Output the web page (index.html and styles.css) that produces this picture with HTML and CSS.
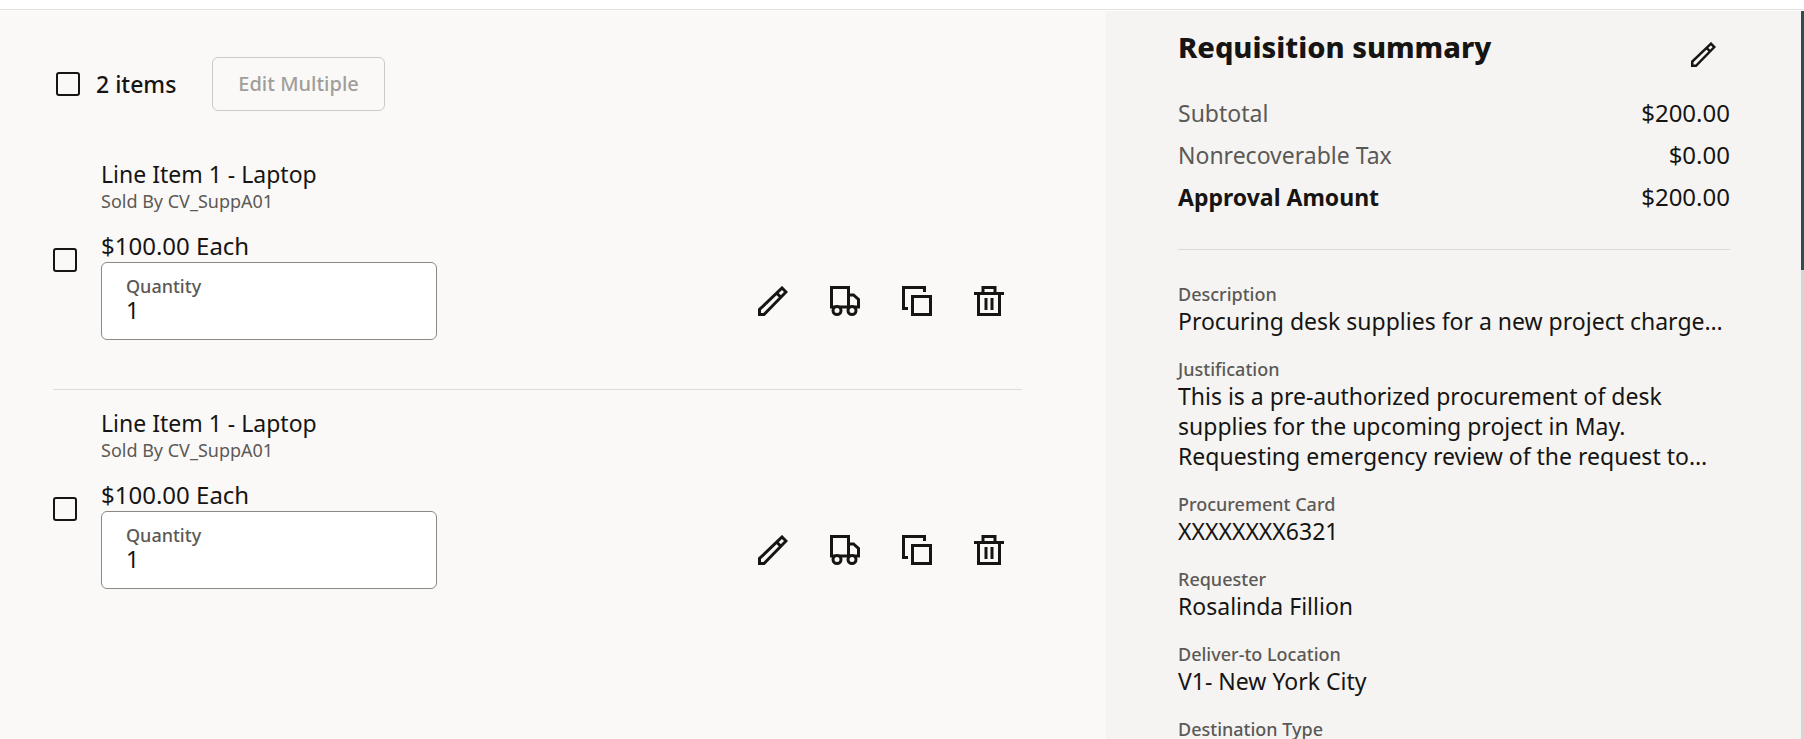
FILE: index.html
```html
<!DOCTYPE html>
<html lang="en">
<head>
<meta charset="utf-8">
<meta name="viewport" content="width=device-width, initial-scale=1">
<title>Requisition</title>
<link rel="stylesheet" href="styles.css">
</head>
<body>
<svg class="sprite" aria-hidden="true">
  <symbol id="icon-pencil" viewBox="0 0 30 30">
    <path d="M1.5 28.500V23.500L24 2 28 6 6 28.500ZM18.500 7 23 11.300" fill="none" stroke="currentColor" stroke-width="3"/>
  </symbol>
  <symbol id="icon-truck" viewBox="0 0 30 30">
    <path d="M1.500 1.500H18.500V21H1.500ZM18.500 9H23.500L28.500 13.500V21H18.500" fill="none" stroke="currentColor" stroke-width="3"/>
    <circle cx="7" cy="24.500" r="4" class="wheel" stroke="currentColor" stroke-width="3"/>
    <circle cx="22" cy="24.500" r="4" class="wheel" stroke="currentColor" stroke-width="3"/>
  </symbol>
  <symbol id="icon-copy" viewBox="0 0 30 30">
    <path d="M6 22.500H1.500V1.500H22.500V6M10.500 10.500H28.500V28.500H10.500Z" fill="none" stroke="currentColor" stroke-width="3"/>
  </symbol>
  <symbol id="icon-trash" viewBox="0 0 30 30">
    <path d="M0 7.500H30M4.500 7.500V28.500H25.500V7.500M9 7.500V1.500H21V7.500M12 12V24M18 12V24" fill="none" stroke="currentColor" stroke-width="3"/>
  </symbol>
</svg>
<div class="app">
  <header class="topbar"></header>
  <div class="content">
    <main class="items">
      <div class="toolbar">
        <label class="select-all"><input type="checkbox" class="check">2 items</label>
        <button type="button" class="edit-multiple" disabled>Edit Multiple</button>
      </div>
      <ul class="list">
        <li class="row">
          <input type="checkbox" class="check" aria-label="Select line 1">
          <div class="detail">
            <div class="name">Line Item 1 - Laptop</div>
            <div class="seller">Sold By CV_SuppA01</div>
            <div class="price">$100.00 Each</div>
            <div class="field">
              <label for="qty1">Quantity</label>
              <input id="qty1" type="text" value="1">
            </div>
          </div>
          <div class="actions">
            <button type="button" aria-label="Edit"><svg><use href="#icon-pencil"/></svg></button>
            <button type="button" aria-label="Delivery"><svg><use href="#icon-truck"/></svg></button>
            <button type="button" aria-label="Duplicate"><svg><use href="#icon-copy"/></svg></button>
            <button type="button" aria-label="Delete"><svg><use href="#icon-trash"/></svg></button>
          </div>
        </li>
        <li class="row">
          <input type="checkbox" class="check" aria-label="Select line 2">
          <div class="detail">
            <div class="name">Line Item 1 - Laptop</div>
            <div class="seller">Sold By CV_SuppA01</div>
            <div class="price">$100.00 Each</div>
            <div class="field">
              <label for="qty2">Quantity</label>
              <input id="qty2" type="text" value="1">
            </div>
          </div>
          <div class="actions">
            <button type="button" aria-label="Edit"><svg><use href="#icon-pencil"/></svg></button>
            <button type="button" aria-label="Delivery"><svg><use href="#icon-truck"/></svg></button>
            <button type="button" aria-label="Duplicate"><svg><use href="#icon-copy"/></svg></button>
            <button type="button" aria-label="Delete"><svg><use href="#icon-trash"/></svg></button>
          </div>
        </li>
      </ul>
    </main>
    <aside class="summary">
      <div class="summary-head">
        <h2>Requisition summary</h2>
        <button type="button" class="edit-summary" aria-label="Edit summary"><svg><use href="#icon-pencil"/></svg></button>
      </div>
      <dl class="totals">
        <div><dt>Subtotal</dt><dd>$200.00</dd></div>
        <div><dt>Nonrecoverable Tax</dt><dd>$0.00</dd></div>
        <div class="total"><dt>Approval Amount</dt><dd>$200.00</dd></div>
      </dl>
      <dl class="facts">
        <div><dt>Description</dt><dd>Procuring desk supplies for a new project charge…</dd></div>
        <div><dt>Justification</dt><dd>This is a pre-authorized procurement of desk supplies for the upcoming project in May. Requesting emergency review of the request to…</dd></div>
        <div><dt>Procurement Card</dt><dd>XXXXXXXX6321</dd></div>
        <div><dt>Requester</dt><dd>Rosalinda Fillion</dd></div>
        <div><dt>Deliver-to Location</dt><dd>V1- New York City</dd></div>
        <div><dt>Destination Type</dt></div>
      </dl>
    </aside>
    <div class="scroll-track"><div class="scroll-thumb"></div></div>
  </div>
</div>
</body>
</html>
```

FILE: styles.css
```css
* { box-sizing: border-box; }

body {
  margin: 0;
  background: #fff;
  color: #161513;
  font-family: "Noto Sans", "Open Sans", sans-serif;
  font-size: 23px;
  line-height: 30px;
}

.sprite { position: absolute; width: 0; height: 0; }

button, input { font: inherit; color: inherit; margin: 0; }

ul, dl, dd, h2 { margin: 0; padding: 0; }

.app { display: flex; flex-direction: column; height: 100vh; overflow: hidden; }

.topbar { flex: none; height: 10px; margin-bottom: 1px; border-bottom: 1px solid #e1e1e1; }

.content {
  flex: 1;
  display: grid;
  grid-template-columns: minmax(0, 1106fr) minmax(0, 695fr) 3px;
  grid-template-rows: minmax(0, 1fr);
  min-height: 0;
}

.items { padding: 46px 84px 0 53px; background: #fbf9f8; }

.toolbar { display: flex; align-items: center; gap: 36px; padding-left: 3px; }

.select-all { display: flex; align-items: center; gap: 16px; font-weight: 500; }

.check {
  appearance: none;
  flex: none;
  width: 24px;
  height: 24px;
  border: 2px solid #161513;
  border-radius: 3px;
}

.edit-multiple {
  height: 54px;
  padding: 0 25px;
  border: 1px solid #cccac8;
  border-radius: 6px;
  background: transparent;
  color: #a09e9b;
  font-size: 20px;
  font-weight: 500;
}

.list { list-style: none; padding-top: 30px; }

.row { display: flex; align-items: center; padding: 17px 0 49px; border-bottom: 1px solid #dfdddb; }

.row:last-child { border-bottom: 0; }

.row .check { margin-top: 22px; }

.detail { flex: none; width: 336px; margin-left: 24px; }

.name { padding-top: 1px; }

.seller { font-size: 18px; line-height: 24px; color: #5b5956; }

.price { padding: 18px 0 1px; font-size: 24px; }

.field {
  height: 78px;
  padding: 12px 24px;
  border: 1px solid #8b8986;
  border-radius: 6px;
  background: #fff;
}

.field label { display: block; font-size: 18px; line-height: 22px; font-weight: 500; color: #5b5956; }

.field input {
  display: block;
  width: 100%;
  height: 26px;
  padding: 0;
  border: 0;
  outline: 0;
  background: transparent;
}

.actions { display: flex; align-self: flex-end; gap: 6px; margin-left: auto; padding-bottom: 6px; }

.actions button, .edit-summary {
  display: flex;
  align-items: center;
  justify-content: center;
  width: 66px;
  height: 66px;
  padding: 0;
  border: 0;
  background: transparent;
}

.actions svg { width: 30px; height: 30px; }

.wheel { fill: #fbf9f8; }

.summary { padding: 16px 71px 0 72px; background: #f5f4f2; overflow: hidden; }

.summary-head { display: flex; justify-content: space-between; align-items: flex-start; height: 65px; }

h2 { font-size: 29px; line-height: 40px; font-weight: 800; }

.edit-summary { width: 54px; height: 54px; }

.edit-summary svg { width: 25px; height: 25px; }

.totals { padding-bottom: 31px; border-bottom: 1px solid #dbd9d7; }

.totals div { display: flex; justify-content: space-between; line-height: 42px; }

.totals dt { color: #5b5956; }

.totals dd { font-size: 24px; }

.totals .total dt { color: #161513; font-weight: 700; }

.facts { display: flex; flex-direction: column; gap: 22px; padding-top: 33px; }

.facts dt { font-size: 18px; line-height: 23px; font-weight: 500; color: #5b5956; }

.scroll-track { display: grid; grid-template-rows: 259fr 469fr; background: #d5d5d5; }

.scroll-thumb { background: #2d4f50; }
```
